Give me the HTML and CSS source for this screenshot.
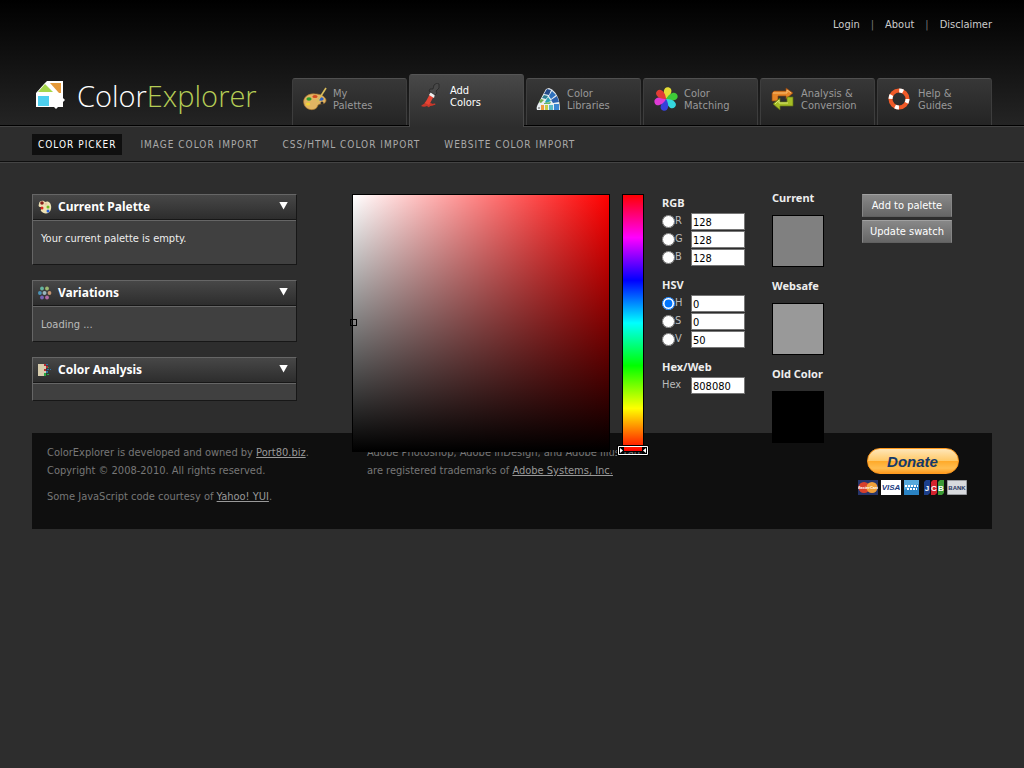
FILE: index.html
```html
<!DOCTYPE html>
<html lang="en">
<head>
<meta charset="utf-8">
<title>ColorExplorer - Color Picker</title>
<link rel="stylesheet" href="styles.css">
</head>
<body>
<header class="header">
  <nav class="toplinks"><a href="#">Login</a><span class="sep">|</span><a href="#">About</a><span class="sep">|</span><a href="#">Disclaimer</a></nav>
  <div class="brandrow">
    <a class="logo" href="#">
      <svg width="32" height="34" viewBox="0 0 32 34"><path d="M2 14 10 5l3-3h16v14h-6z" fill="#fff"/><path d="M2 14h27v5l2 2-2 2v5h-5l-2 2-2-2H2z" fill="#fff"/><path d="M16 4h11v10h-2z" fill="#e69a3a"/><path d="m4 13 7-8 8 8z" fill="#a5d64c"/><path d="M4 17h11v10H4z" fill="#4dd0f0"/></svg>
      <span class="logotext">Color<span class="green">Explorer</span></span>
    </a>
    <nav class="tabs">
      <a class="tab" href="#">
        <svg width="26" height="26" viewBox="0 0 26 26"><path d="M2 18c-2-6 4-11 11-10 5 0 10 2 11 6 0 4-4 4-6 4-3 0-2 4-5 5-5 2-10-1-11-5z" fill="#e2b463" stroke="#b07a2c" stroke-width=".7"/><ellipse cx="7" cy="13" rx="2.6" ry="1.8" fill="#2d9e2f"/><ellipse cx="13" cy="10.500" rx="2.600" ry="1.600" fill="#d24a20"/><ellipse cx="19" cy="13" rx="2.700" ry="1.700" fill="#2c62c4"/><ellipse cx="6" cy="18" rx="2.200" ry="1.600" fill="#f2d334"/><circle cx="20" cy="17" r="1.500" fill="#2b2b2b"/><path d="M15 16 24 2" stroke="#d9bd5c" stroke-width="1.600"/></svg>
        <span>My<br>Palettes</span></a>
      <a class="tab active" href="#">
        <svg width="26" height="26" viewBox="0 0 26 26"><path d="M2 23c2-2 4-2 4-4 3-1 5 1 8 2 2-1 3 0 2 1-2 0-2 1-5 1-1 2-2 1-3 0-2 1-4 1-6 0z" fill="#c8382a"/><path d="m6 20 5-9 4 2-5 9z" fill="#e64434"/><path d="m10 12 2-3 4 2-1 4z" fill="#eee"/><path d="m10 8 1-2 3 0 1-4 3-2 2 1v4l-3 3 1 2-2 2z" fill="#484848" stroke="#222" stroke-width=".7"/></svg>
        <span>Add<br>Colors</span></a>
      <a class="tab" href="#">
        <svg width="26" height="26" viewBox="0 0 26 26"><path d="M1 24c-1-2 0-4 1-6L10 3l3-1c7 3 11 10 11 22z" fill="#e8eef2"/><path d="m11 3 4 1-2 5-5-1z" fill="#244b8a"/><path d="m16 5 4 4-5 4-2-3z" fill="#2f70bc"/><path d="m21 10 2 6-6 1-2-3z" fill="#2b60ad"/><path d="m8 9 4 1-2 3-4-1z" fill="#2b7c92"/><path d="m12 11 3 4-5 2-1-1z" fill="#28a3b4"/><path d="m5 13 3 1-3 3-2-1z" fill="#70ad48"/><path d="m8 17 7-1-1 2H8z" fill="#69b763"/><path d="M5 19h3v5H5z" fill="#f09b3c"/><path d="M9 19h3v5H9z" fill="#c4cc45"/><path d="M13 19h4v5h-4z" fill="#5ab9c4"/><path d="M18 18h5v6h-5z" fill="#3a86d2"/><circle cx="3" cy="22" r="1" fill="#888"/></svg>
        <span>Color<br>Libraries</span></a>
      <a class="tab" href="#">
        <svg width="26" height="26" viewBox="0 0 26 26"><g transform="rotate(12 13 13)"><path d="M13 13C8 8 8 1 13 1s5 7 0 12z" fill="#e5dd35"/><path d="M13 13C8 8 8 1 13 1s5 7 0 12z" fill="#3ecb38" transform="rotate(60 13 13)"/><path d="M13 13C8 8 8 1 13 1s5 7 0 12z" fill="#34d6de" transform="rotate(120 13 13)"/><path d="M13 13C8 8 8 1 13 1s5 7 0 12z" fill="#3640da" transform="rotate(180 13 13)"/><path d="M13 13C8 8 8 1 13 1s5 7 0 12z" fill="#de3bd5" transform="rotate(240 13 13)"/><path d="M13 13C8 8 8 1 13 1s5 7 0 12z" fill="#e33d35" transform="rotate(300 13 13)"/></g></svg>
        <span>Color<br>Matching</span></a>
      <a class="tab" href="#">
        <svg width="26" height="26" viewBox="0 0 26 26"><path d="M2 15V7l2-2h12V2l7 5-7 6v-3H8v5z" fill="#e58427" stroke="#8b4210" stroke-width=".7"/><path d="M3 7h14V4l4 3" fill="none" stroke="#f7bd72"/><path d="M23 11v9H10v4l-7-6 7-6v4h7v-5z" fill="#a5bd25" stroke="#617313" stroke-width=".7"/><path d="m5 18 4-4v3h9" fill="none" stroke="#d9e877"/></svg>
        <span>Analysis &amp;<br>Conversion</span></a>
      <a class="tab" href="#">
        <svg width="26" height="26" viewBox="0 0 26 26"><circle cx="12" cy="13" r="8.500" fill="none" stroke="#f05a28" stroke-width="4"/><circle cx="12" cy="13" r="8.500" fill="none" stroke="#fff" stroke-width="4" stroke-dasharray="4 9.352"/></svg>
        <span>Help &amp;<br>Guides</span></a>
    </nav>
  </div>
</header>
<nav class="subnav">
  <a class="on" href="#">COLOR PICKER</a><a href="#">IMAGE COLOR IMPORT</a><a href="#">CSS/HTML COLOR IMPORT</a><a href="#">WEBSITE COLOR IMPORT</a>
</nav>
<main class="main">
  <div class="panels">
    <section class="panel">
      <h2><svg width="14" height="14" viewBox="0 0 14 14"><path d="M1 4C1 0 6 0 7 2c4-2 7 2 6 7s-7 6-10 2C2 9 5 8 3 7 1 7 0 6 1 4z" fill="#eee2b4"/><circle cx="4" cy="3" r="1.800" fill="#841c18"/><circle cx="8" cy="4" r="1.500" fill="#e9c9a4"/><circle cx="4" cy="8" r="1.500" fill="#d92b20"/><circle cx="10" cy="7" r="1.500" fill="#6ebc25"/><circle cx="10" cy="11" r="1.500" fill="#2962d8"/></svg>Current Palette<button class="toggle" aria-label="Toggle Current Palette"></button></h2>
      <div class="body tall">Your current palette is empty.</div>
    </section>
    <section class="panel">
      <h2><svg width="14" height="14" viewBox="0 0 14 14"><circle cx="4" cy="2.500" r="1.900" fill="#64b4a0"/><circle cx="9" cy="2.500" r="1.900" fill="#9db86f"/><circle cx="1.900" cy="7" r="1.900" fill="#4a92b5"/><circle cx="6.500" cy="7" r="2" fill="#9ab6bd"/><circle cx="11.500" cy="7" r="1.900" fill="#c49370"/><circle cx="4" cy="11.500" r="1.900" fill="#7764b4"/><circle cx="9" cy="11.500" r="1.900" fill="#b06ba5"/></svg>Variations<button class="toggle" aria-label="Toggle Variations"></button></h2>
      <div class="body mid">Loading ...</div>
    </section>
    <section class="panel">
      <h2><svg width="14" height="14" viewBox="0 0 14 14"><path d="M0 1h8v12H0z" fill="#d8cdad"/><path d="M6 1h2v2H6zM8 3h2v2H8zM6 6h2v2H6z" fill="#bc2834"/><path d="M8 1h2v1H8zM9 6h2v1H9zM12 6h1v1h-1zM8 8h2v2H8z" fill="#2f74a5"/><path d="M6 10h2v3H6zM9 11h2v1H9zM10 4h1v1h-1z" fill="#27a944"/></svg>Color Analysis<button class="toggle" aria-label="Toggle Color Analysis"></button></h2>
      <div class="body short"></div>
    </section>
  </div>
  <form class="picker">
    <div class="field"><span class="cursor"></span></div>
    <div class="hue"><span class="thumb"><svg width="32" height="11" viewBox="0 0 32 11"><path d="M.5.5h31v10H.5z" fill="none" stroke="#000"/><path d="M1.500 1.500h29v8h-29z" fill="none" stroke="#fff"/><path d="M2 2h5v7H2zM25 2h5v7h-5z" fill="#000"/><path d="m3 3 3 2.500L3 8zM29 3l-3 2.500L29 8z" fill="#fff"/></svg></span></div>
    <div class="values">
      <div class="group"><h3>RGB</h3>
        <div class="row"><input type="radio" name="ch" id="r"><label for="r">R</label><input class="num" value="128" aria-label="Red"></div>
        <div class="row"><input type="radio" name="ch" id="g"><label for="g">G</label><input class="num" value="128" aria-label="Green"></div>
        <div class="row"><input type="radio" name="ch" id="b"><label for="b">B</label><input class="num" value="128" aria-label="Blue"></div></div>
      <div class="group"><h3>HSV</h3>
        <div class="row"><input type="radio" name="ch" id="h" checked><label for="h">H</label><input class="num" value="0" aria-label="Hue"></div>
        <div class="row"><input type="radio" name="ch" id="s"><label for="s">S</label><input class="num" value="0" aria-label="Saturation"></div>
        <div class="row"><input type="radio" name="ch" id="v"><label for="v">V</label><input class="num" value="50" aria-label="Value"></div></div>
      <div class="group"><h3>Hex/Web</h3>
        <div class="row"><label for="hex">Hex</label><input class="num" id="hex" value="808080"></div></div>
    </div>
    <div class="swatches">
      <h3>Current</h3><div class="swatch current"></div>
      <h3>Websafe</h3><div class="swatch websafe"></div>
      <h3>Old Color</h3><div class="swatch old"></div>
    </div>
    <div class="actions"><button type="button">Add to palette</button><button type="button">Update swatch</button></div>
  </form>
</main>
<footer class="footer">
  <div class="credits"><p>ColorExplorer is developed and owned by <a href="#">Port80.biz</a>.<br>Copyright © 2008-2010. All rights reserved.</p><p>Some JavaScript code courtesy of <a href="#">Yahoo! YUI</a>.</p></div>
  <div class="marks"><p>Adobe Photoshop, Adobe InDesign, and Adobe Illustrator<br>are registered trademarks of <a href="#">Adobe Systems, Inc.</a></p></div>
  <div class="donatebox">
    <button class="donate">Donate</button>
    <div class="cards">
      <svg width="20" height="15" viewBox="0 0 20 15"><path d="M0 0h20v15H0z" fill="#26356b"/><circle cx="6" cy="7.500" r="5.500" fill="#d8402c"/><circle cx="14" cy="7.500" r="5.500" fill="#f0a13a"/><text x="10" y="9" class="ct mc">MasterCard</text></svg>
      <svg width="20" height="15" viewBox="0 0 20 15"><path d="M0 0h20v15H0z" fill="#fff"/><text x="10" y="10" class="ct visa">VISA</text></svg>
      <svg width="17" height="15" viewBox="0 0 17 15"><path d="M0 0h15v15H0z" fill="#2a83c4"/><path d="M0 0h15v4L0 10z" fill="#55a9dc"/><path d="M1 6h13M3 9h10" stroke="#fff" stroke-width="2" stroke-dasharray="2 1"/></svg>
      <svg width="20" height="15" viewBox="0 0 20 15"><path d="M2 0h4v13l-2 2H0V2z" fill="#1c3f8b"/><path d="M9 0h4v13l-2 2H7V2z" fill="#d5232e"/><path d="M16 0h4v13l-2 2h-4V2z" fill="#3c9a35"/><text x="3" y="11" class="ct jcb">J</text><text x="10" y="11" class="ct jcb">C</text><text x="17" y="11" class="ct jcb">B</text></svg>
      <svg width="20" height="15" viewBox="0 0 20 15"><path d="M.5.5h19v14H.5z" fill="#d8dadd" stroke="#9a9ca0"/><text x="10" y="10" class="ct bank">BANK</text></svg>
    </div>
  </div>
</footer>
</body>
</html>
```
FILE: styles.css
```css
* { box-sizing: border-box; }
body { margin: 0; background: #2d2d2d; color: #bbb; font: 11px/18px "DejaVu Sans Condensed", "Noto Sans", sans-serif; }
a { color: inherit; text-decoration: none; }
h2, h3, p { margin: 0; }
h2, h3 { font-family: "Noto Sans", sans-serif; }
svg { display: block; flex: none; }
.header { height: 126px; padding: 16px 32px 0; background: linear-gradient(#000, #242424); border-bottom: 1px solid #000; display: flex; flex-direction: column; justify-content: space-between; }
.toplinks { display: flex; justify-content: flex-end; gap: 11px; color: #ccc; }
.sep { color: #777; }
.brandrow { display: flex; justify-content: space-between; align-items: flex-end; }
.logo { display: flex; align-items: center; gap: 11px; padding: 0 0 8px 2px; color: #fff; }
.logotext { font: 300 29px/42px "Open Sans", sans-serif; }
.green { color: #b5cc55; }
.tabs { display: flex; align-items: flex-end; gap: 2px; }
.tab { display: flex; gap: 5px; width: 115px; height: 47px; padding: 9px 9px 0; border: 1px solid #3d3d3d; border-top-color: #505050; border-bottom: 0; border-radius: 3px 3px 0 0; background: linear-gradient(#373737, #242424); color: #999; line-height: 12px; }
.tab svg { margin-top: -2px; }
.tab.active { height: 53px; padding-top: 10px; margin-bottom: -2px; background: linear-gradient(#484848, #2d2d2d); color: #fff; border-color: #555 #484848; }
.subnav { display: flex; gap: 12px; padding: 7px 32px 6px; border-top: 1px solid #444; border-bottom: 1px solid #0e0e0e; box-shadow: 0 1px #444; color: #aaa; font-size: 10px; letter-spacing: 1px; }
.subnav a { padding: 0 6px; line-height: 21px; }
.subnav .on { background: #0f0f0f; color: #fff; }
.main { position: relative; padding: 32px; }
.panels { width: 265px; display: flex; flex-direction: column; gap: 15px; }
.panel { border: 1px solid #666; border-right-color: #171717; border-bottom-color: #171717; background: #404040; }
.panel h2 { display: flex; align-items: center; gap: 6px; height: 25px; padding: 0 8px 0 5px; border-bottom: 1px solid #171717; background: linear-gradient(#474747, #2d2d2d); color: #fff; font-size: 12px; line-height: 20px; }
.toggle { margin: 0 0 3px auto; width: 9px; height: 8px; padding: 0; border: 0; background: #fff; clip-path: polygon(0 0, 100% 0, 50% 100%); }
.body { padding: 9px 8px 7px; border-top: 1px solid #666; }
.tall { min-height: 44px; color: #eee; }
.mid { min-height: 35px; }
.short { min-height: 17px; }
.picker { position: absolute; top: 32px; left: 352px; display: flex; align-items: flex-start; }
.field { position: relative; width: 258px; height: 258px; border: 1px solid #000; background: linear-gradient(transparent, #000), linear-gradient(90deg, #fff, #f00); }
.cursor { position: absolute; left: -3px; top: 124px; width: 7px; height: 7px; border: 1px solid #000; }
.hue { position: relative; width: 22px; height: 258px; margin-left: 12px; border: 1px solid #000; background: linear-gradient(#f00, #f0f, #00f, #0ff, #0f0, #ff0, #f00); }
.thumb { position: absolute; left: -6px; top: 250px; }
.values { width: 83px; margin-left: 18px; display: flex; flex-direction: column; gap: 10px; }
h3 { color: #eee; font-size: 11px; line-height: 18px; }
.row { display: flex; align-items: center; height: 18px; line-height: 20px; }
.row input[type="radio"] { width: 13px; height: 13px; margin: 0; }
.num { width: 54px; height: 17px; margin-left: auto; padding: 2px 1px 0; border: 1px solid #767676; border-radius: 0; background: #fff; color: #000; font: inherit; line-height: 14px; }
.swatches { width: 64px; margin-left: 27px; margin-top: -5px; }
.swatch { width: 52px; height: 52px; margin: 8px 0 10px; border: 1px solid #000; }
.current { background: #808080; }
.websafe { background: #999; }
.old { background: #000; }
.actions { margin-left: 26px; display: flex; flex-direction: column; gap: 3px; }
.actions button { width: 90px; height: 23px; padding: 0; border: 1px solid #858585; border-top-color: #a0a0a0; border-bottom-color: #606060; background: linear-gradient(#888, #666); color: #fff; font: inherit; white-space: nowrap; }
.footer { display: flex; margin: 0 32px; min-height: 96px; padding: 11px 15px 9px; background: #0f0f0f; color: #777; }
.footer a { color: #999; text-decoration: underline; }
.credits { width: 320px; }
.credits p { margin-bottom: 8px; }
.marks { white-space: nowrap; }
.donatebox { margin: 4px 10px 0 auto; display: flex; flex-direction: column; align-items: center; gap: 6px; }
.donate { width: 92px; height: 26px; padding: 0; border: 1px solid #ff9a1f; border-radius: 13px; background: linear-gradient(#ffe6b8, #ffc866 50%, #ffaa2a 52%, #ffbe50 80%, #ff9c20); color: #153a69; font: italic bold 15px "Liberation Sans", Arial, sans-serif; }
.cards { display: flex; gap: 3px; }
.ct { font: bold 6px "Liberation Sans", sans-serif; text-anchor: middle; fill: #fff; }
.ct.mc { font-size: 4px; }
.ct.visa { font-size: 8px; font-style: italic; fill: #1b3b82; }
.ct.jcb { font-size: 8px; }
.ct.bank { fill: #25355e; }
```
